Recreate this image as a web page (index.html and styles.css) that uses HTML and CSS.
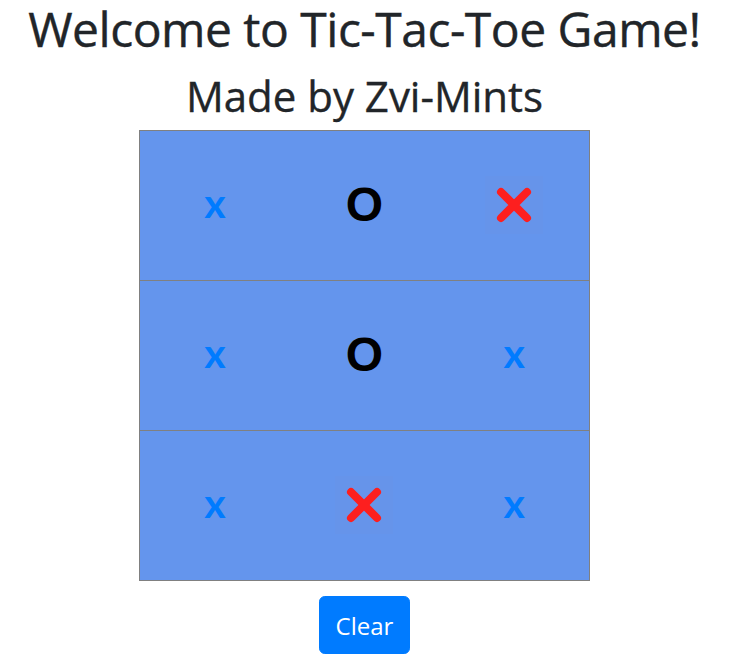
FILE: index.html
```html
<!DOCTYPE html>
<html lang="en">
<head>
<meta charset="utf-8">
<title>Tic-Tac-Toe</title>
<link rel="stylesheet" href="styles.css">
</head>
<body>
<div class="page">
  <h1 class="title">Welcome to Tic-Tac-Toe Game!</h1>
  <h2 class="subtitle">Made by Zvi-Mints</h2>
  <div class="board">
    <div class="row">
      <div class="cell"><span class="mark-x">x</span></div>
      <div class="cell"><span class="mark-o">O</span></div>
      <div class="cell"><svg class="cross" width="58" height="58" viewBox="0 0 58 58"><rect width="58" height="58" fill="#6694ea"/><path d="M16 16 L42 42 M42 16 L16 42" stroke="#fd1f1f" stroke-width="8" stroke-linecap="round"/></svg></div>
    </div>
    <div class="row">
      <div class="cell"><span class="mark-x">x</span></div>
      <div class="cell"><span class="mark-o">O</span></div>
      <div class="cell"><span class="mark-x">x</span></div>
    </div>
    <div class="row">
      <div class="cell"><span class="mark-x">x</span></div>
      <div class="cell"><svg class="cross" width="58" height="58" viewBox="0 0 58 58"><rect width="58" height="58" fill="#6694ea"/><path d="M16 16 L42 42 M42 16 L16 42" stroke="#fd1f1f" stroke-width="8" stroke-linecap="round"/></svg></div>
      <div class="cell"><span class="mark-x">x</span></div>
    </div>
  </div>
  <button class="btn-clear" type="button">Clear</button>
</div>
</body>
</html>
```
FILE: styles.css
```css
html, body {
  margin: 0;
  padding: 0;
  background: #fff;
}
body {
  font-family: "Open Sans", "Noto Sans", sans-serif;
  color: #212529;
}
.page {
  width: 729px;
  display: flex;
  flex-direction: column;
  align-items: center;
  text-align: center;
}
.title {
  font-size: 48px;
  font-weight: 400;
  -webkit-text-stroke: 0.4px #212529;
  letter-spacing: -0.5px;
  line-height: 57.6px;
  margin: 0 0 14px;
}
.subtitle {
  font-size: 42px;
  font-weight: 400;
  -webkit-text-stroke: 0.35px #212529;
  line-height: 48px;
  margin: 0 0 10px;
}
.board {
  width: 449px;
  border: 1px solid #808080;
  display: flex;
  flex-direction: column;
}
.row {
  display: grid;
  grid-template-columns: repeat(3, 1fr);
  height: 149px;
  background: #6495ed;
  border-bottom: 1px solid #808080;
}
.row:last-child {
  border-bottom: none;
}
.cell {
  display: flex;
  align-items: center;
  justify-content: center;
}
.mark-x {
  color: #007bff;
  font-family: Lato, "Open Sans", sans-serif;
  font-weight: 700;
  font-size: 41px;
  line-height: 1;
  padding-bottom: 5px;
}
.mark-o {
  color: #000;
  font-family: "Liberation Sans", Arial, sans-serif;
  font-weight: 700;
  font-size: 48px;
  line-height: 1;
}
.cross {
  display: block;
}
.btn-clear {
  margin-top: 15px;
  font-family: "Open Sans", "Noto Sans", sans-serif;
  font-size: 24px;
  line-height: 36px;
  padding: 11.5px 15.8px 8.5px;
  color: #fff;
  background: #007bff;
  border: 1.2px solid #007bff;
  border-radius: 5.8px;
}
```
